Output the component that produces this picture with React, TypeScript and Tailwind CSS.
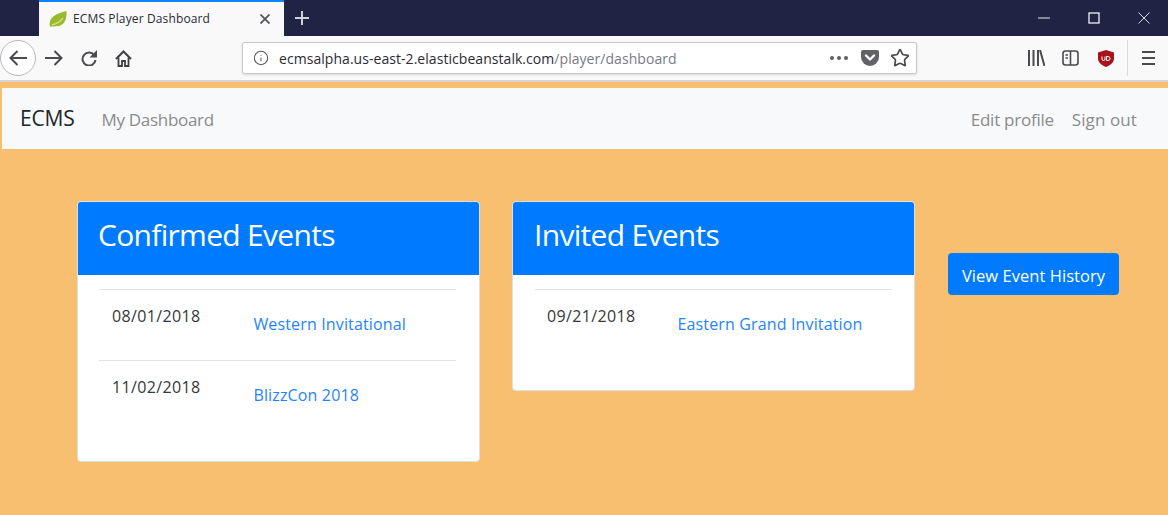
import { Info, Star } from 'lucide-react'

const font = "font-['Open_Sans','Liberation_Sans',sans-serif]"

interface EventRow {
  date: string
  name: string
}

const confirmed: EventRow[] = [
  { date: '08/01/2018', name: 'Western Invitational' },
  { date: '11/02/2018', name: 'BlizzCon 2018' },
]
const invited: EventRow[] = [{ date: '09/21/2018', name: 'Eastern Grand Invitation' }]

interface EventCardProps {
  title: string
  rows: EventRow[]
  titlePad: string
  bodyPad: string
  rowPad: string
  linkGap: string
}

function EventCard({ title, rows, titlePad, bodyPad, rowPad, linkGap }: EventCardProps) {
  return (
    <div className="w-[403px] shrink-0 rounded-[4px] border border-[#dfdfdf] bg-white overflow-hidden">
      <div className={`${titlePad} h-[74px] -mx-px -mt-px bg-[#007bff] pt-[13px] text-[30px] leading-[42px] tracking-[-0.7px] text-white`}>
        {title}
      </div>
      <div className={`${bodyPad} pt-[14px] pb-[30px]`}>
        {rows.map((row) => (
          <div key={row.date} className={`${rowPad} h-[71px] border-t border-[#e2e2e2] flex`}>
            <span className="pt-[15px] text-[16px] leading-[22px] tracking-[0.35px] text-[#33383c]">{row.date}</span>
            <a className={`${linkGap} pt-[23px] text-[16px] leading-[22px] tracking-[0.15px] text-[#1f84ff]`}>{row.name}</a>
          </div>
        ))}
      </div>
    </div>
  )
}

export default function App() {
  return (
    <div className={`${font} h-[515px] w-[1168px] overflow-hidden bg-[#f9bf71]`}>
      {/* Tab strip */}
      <div className="h-[36px] bg-[#1f2344] flex items-stretch text-white">
        <div className="w-[39px]" />
        <div className="w-[245px] bg-[#f9f9fa] border-t-2 border-[#0a84ff] flex items-center pl-[10px] pr-[14px] text-[#2b2b33]">
          <svg viewBox="0 0 18 16" className="w-[18px] h-[16px] shrink-0">
            <path d="M1 15.500C-1 8 5 3 17.500 0c.5 8-2 14-8 15-3 .5-6 .5-8.500.5z" fill="#9ab92e" />
            <path d="M3 14c4-1 8-3 11-7" stroke="#d5e07e" strokeWidth="1.300" fill="none" />
          </svg>
          <span className="ml-[6px] text-[12px] tracking-[0.13px]">ECMS Player Dashboard</span>
          <svg viewBox="0 0 10 10" className="ml-auto w-[10px] h-[10px]" stroke="#55555a" strokeWidth="1.800" fill="none">
            <path d="M.5.5l9 9M9.500.5l-9 9" />
          </svg>
        </div>
        <div className="w-[36px] flex items-center justify-center">
          <svg viewBox="0 0 14 14" className="w-[14px] h-[14px]" stroke="#cfd0d8" strokeWidth="2" fill="none">
            <path d="M7 0v14M0 7h14" />
          </svg>
        </div>
        <div className="ml-auto flex items-center gap-[38px] pr-[18px]">
          <svg viewBox="0 0 12 12" className="w-[12px] h-[12px]" stroke="#d8d9e0" strokeWidth="1.100" fill="none">
            <path d="M0 6h12" />
          </svg>
          <svg viewBox="0 0 12 12" className="w-[12px] h-[12px]" stroke="#f2f2f5" strokeWidth="1.300" fill="none">
            <rect x="1" y="1" width="10" height="10" />
          </svg>
          <svg viewBox="0 0 12 12" className="w-[12px] h-[12px]" stroke="#d8d9e0" strokeWidth="1" fill="none">
            <path d="M.5.5l11 11M11.500.5l-11 11" />
          </svg>
        </div>
      </div>

      {/* Toolbar */}
      <div className="h-[46px] bg-[#f9f9fa] border-b-2 border-[#d4d4d6] flex items-center text-[#4a4a4f]">
        <div className="w-[36px] h-[36px] rounded-full border border-[#b8b8ba] bg-white flex items-center justify-center shrink-0">
          <svg viewBox="0 0 18 16" className="w-[18px] h-[16px]" stroke="#4a4a4f" strokeWidth="2" fill="none">
            <path d="M1.500 8H18M8.500 1l-7 7 7 7" />
          </svg>
        </div>
        <svg viewBox="0 0 18 16" className="ml-[9px] w-[18px] h-[16px]" stroke="#4a4a4f" strokeWidth="2" fill="none">
          <path d="M0 8h16.500M9.500 1l7 7-7 7" />
        </svg>
        <svg viewBox="0 0 16 16" className="ml-[18px] w-[16px] h-[16px]" fill="none">
          <path d="M13.500 5.500A6.500 6.500 0 1 0 14.500 10" stroke="#4a4a4f" strokeWidth="2" />
          <path d="M16 0v7.500H8.500z" fill="#4a4a4f" />
        </svg>
        <svg viewBox="0 0 17 17" className="ml-[18px] w-[17px] h-[17px]" stroke="#3f3f44" fill="none">
          <path d="M1 9l7.500-7.500L16 9" strokeWidth="2" />
          <path d="M3.500 7.500V16h3.500v-5h3v5h3.500V7.500" strokeWidth="1.800" />
        </svg>
        <div className="ml-[110px] w-[675px] h-[32px] rounded-[2px] border border-[#c8c8ca] bg-white flex items-center pl-[10px] pr-[6px] shadow-sm">
          <Info className="w-[16px] h-[16px] text-[#5a5a5e]" strokeWidth={1.6} />
          <span className="ml-[10px] text-[14px] tracking-[0.05px] text-[#2b2b33]">
            ecmsalpha.us-east-2.elasticbeanstalk.com<span className="text-[#7b7b80]">/player/dashboard</span>
          </span>
          <svg viewBox="0 0 18 4" className="ml-auto w-[18px] h-[4px]" fill="#5f5f63">
            <circle cx="2" cy="2" r="2" />
            <circle cx="9" cy="2" r="2" />
            <circle cx="16" cy="2" r="2" />
          </svg>
          <svg viewBox="0 0 18 16" className="ml-[13px] w-[18px] h-[16px]">
            <path d="M2 0h14a2 2 0 0 1 2 2v5a9 9 0 0 1-18 0V2a2 2 0 0 1 2-2z" fill="#636367" />
            <path d="M5 5.500l4 4 4-4" stroke="#fff" strokeWidth="2.400" fill="none" strokeLinecap="round" strokeLinejoin="round" />
          </svg>
          <Star className="ml-[11px] w-[20px] h-[20px] text-[#4a4a4f]" strokeWidth={2} />
        </div>
        <svg viewBox="0 0 17 16" className="ml-[111px] w-[17px] h-[16px]" stroke="#4a4a4f" strokeWidth="2" fill="none">
          <path d="M1 0v16M5.500 0v16M10 0v16M12 0l4.500 16" />
        </svg>
        <svg viewBox="0 0 17 16" className="ml-[17px] w-[17px] h-[16px]" stroke="#4a4a4f" strokeWidth="1.600" fill="none">
          <rect x="1" y="1" width="15" height="14" rx="2.500" />
          <path d="M8.500 1v14M3.500 5h2.500M3.500 8h2.500" />
        </svg>
        <svg viewBox="0 0 16 17" className="ml-[19px] w-[16px] h-[17px]">
          <path d="M8 0l8 2.500v6c0 4-3.500 6.500-8 8.500-4.500-2-8-4.500-8-8.500v-6z" fill="#a6131b" />
          <path d="M4 6.500v2.500a1.500 1.500 0 0 0 3 0V6.500M8.500 6.500v4h1.500a2 2 0 0 0 0-4z" stroke="#fff" strokeWidth="1" fill="none" />
        </svg>
        <div className="ml-[13px] h-[36px] w-px bg-[#dcdcde]" />
        <svg viewBox="0 0 13 14" className="ml-[14px] w-[13px] h-[14px]" stroke="#4a4a4f" strokeWidth="2" fill="none">
          <path d="M0 1h13M0 7h13M0 13h13" />
        </svg>
      </div>

      {/* Navbar */}
      <nav className="mt-[6px] ml-[2px] h-[61px] bg-[#f8f9fa] flex items-center pl-[18px] pr-[31px] text-[17px] text-[#8a8b8c]">
        <span className="pt-[1px] text-[21px] tracking-[-0.2px] text-[#212529]">ECMS</span>
        <a className="ml-[27px] pt-[2px] tracking-[-0.3px]">My Dashboard</a>
        <a className="ml-auto pt-[2px] tracking-[-0.25px]">Edit profile</a>
        <a className="ml-[18px] pt-[2px] tracking-[0.1px]">Sign out</a>
      </nav>

      {/* Content */}
      <main className="pt-[52px] pl-[77px] flex items-start">
        <EventCard title="Confirmed Events" rows={confirmed} titlePad="pl-[21px]" bodyPad="pl-[21px] pr-[23px]" rowPad="pl-[13px]" linkGap="ml-[53px]" />
        <div className="ml-[32px]">
          <EventCard title="Invited Events" rows={invited} titlePad="pl-[22px]" bodyPad="px-[22px]" rowPad="pl-[12px]" linkGap="ml-[42px]" />
        </div>
        <button className="ml-[33px] mt-[52px] h-[42px] w-[171px] rounded-[4px] bg-[#007bff] pt-[4px] text-[16.500px] tracking-[0.05px] text-white">
          View Event History
        </button>
      </main>
    </div>
  )
}
